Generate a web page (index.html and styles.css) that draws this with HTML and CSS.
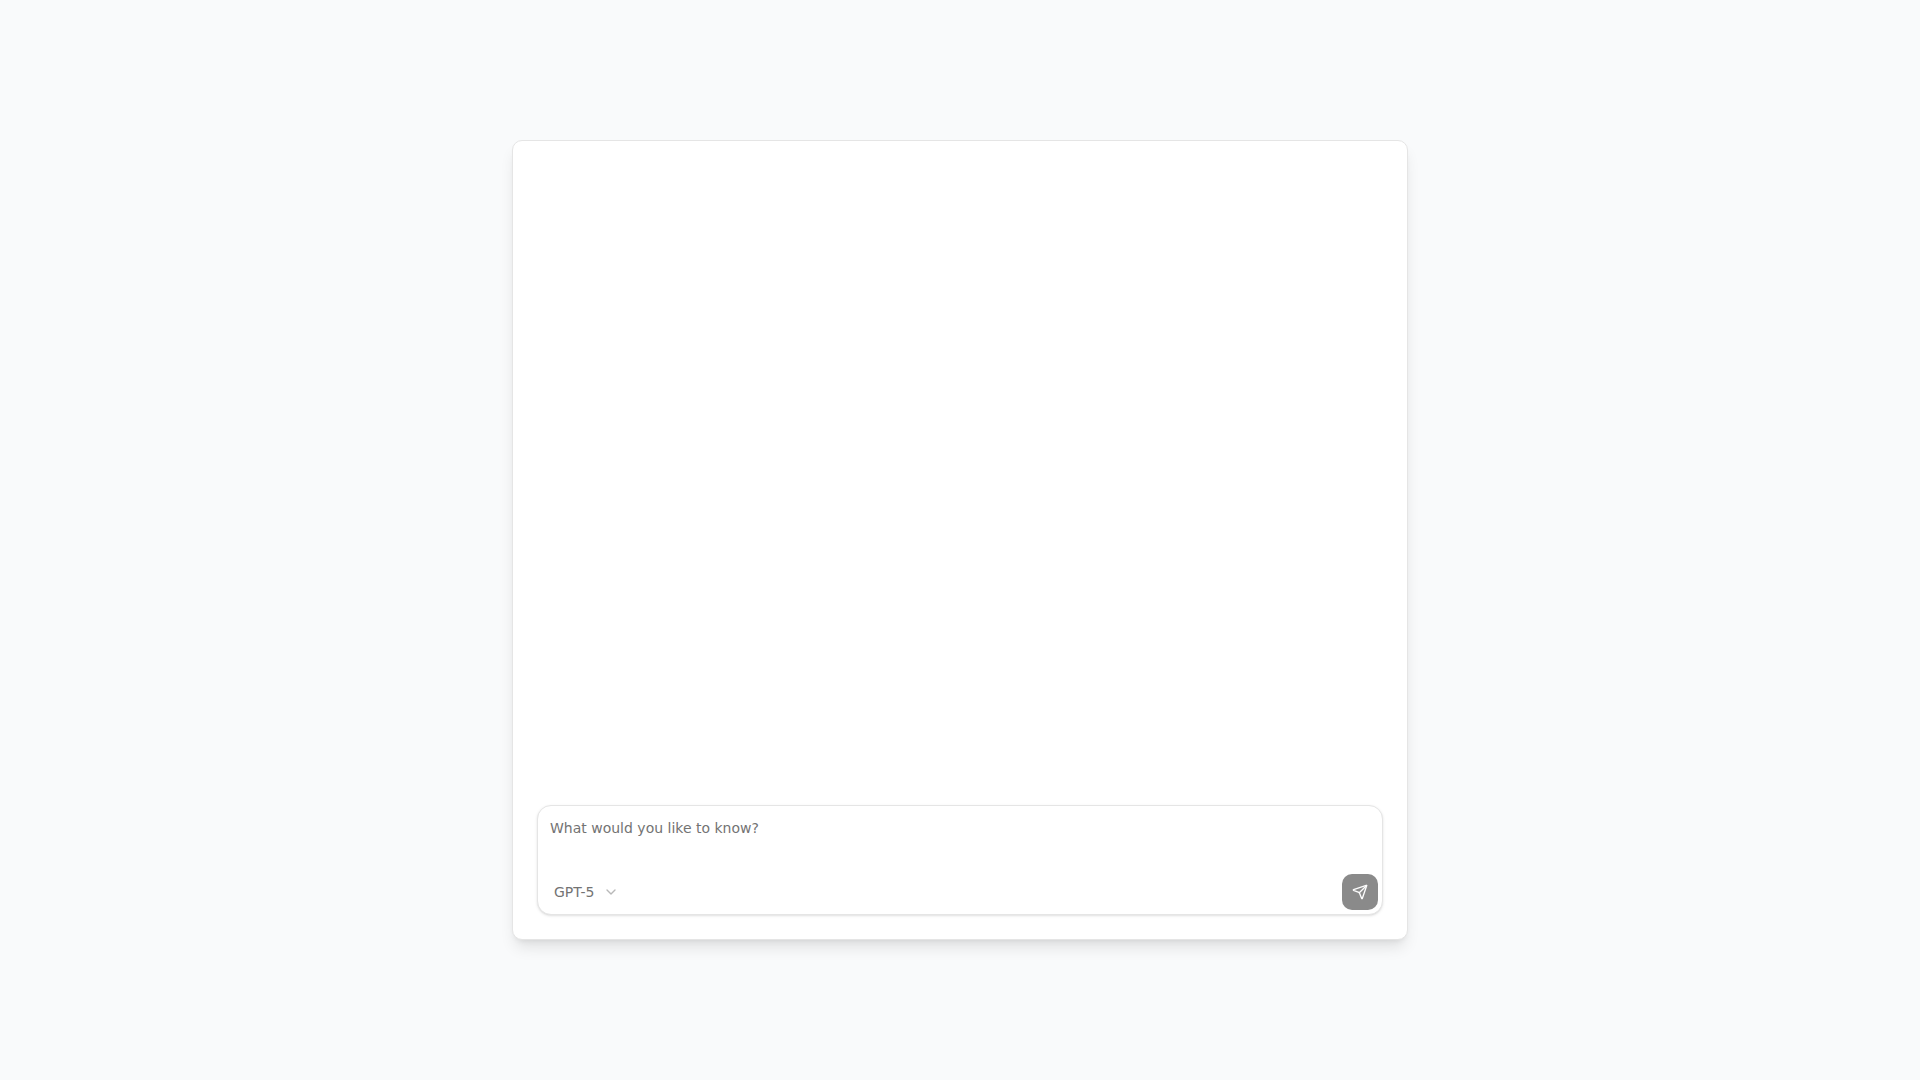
FILE: index.html
```html
<!DOCTYPE html>
<html lang="en">
<head>
  <meta charset="UTF-8" />
  <meta name="viewport" content="width=device-width, initial-scale=1.0" />
  <title>Chat</title>
  <link rel="stylesheet" href="styles.css">
</head>
<body>
  <main class="chat">
    <div class="messages" id="messages"></div>

    <form class="prompt">
      <textarea class="prompt-input" name="message" placeholder="What would you like to know?" aria-label="Message"></textarea>
      <div class="toolbar">
        <div class="model">
          <select class="model-select" name="model" aria-label="Model">
            <option>GPT-5</option>
          </select>
          <svg class="icon chevron" viewBox="0 0 24 24"><path d="m6 9 6 6 6-6" /></svg>
        </div>
        <button class="send-btn" type="submit" aria-label="Send" disabled>
          <svg class="icon" viewBox="0 0 24 24">
            <path d="M14.536 21.686a.5.5 0 0 0 .937-.024l6.5-19a.496.496 0 0 0-.635-.635l-19 6.5a.5.5 0 0 0-.024.937l7.93 3.18a2 2 0 0 1 1.112 1.11z" />
            <path d="m21.854 2.147-10.94 10.939" />
          </svg>
        </button>
      </div>
    </form>
  </main>
</body>
</html>
```
FILE: styles.css
```css
* {
  box-sizing: border-box;
}
body {
  margin: 0;
  min-height: 100vh;
  display: flex;
  align-items: center;
  justify-content: center;
  background-color: #f9fafb;
  font-family: "DejaVu Sans", sans-serif;
  font-size: 14px;
  line-height: 20px;
}
.chat {
  display: flex;
  flex-direction: column;
  width: 100%;
  max-width: 896px;
  min-height: 800px;
  padding: 24px;
  background-color: white;
  border: 1px solid #e5e5e5;
  border-radius: 10px;
  box-shadow: 0 10px 15px -3px rgba(0, 0, 0, 0.1), 0 4px 6px -4px rgba(0, 0, 0, 0.1);
}
.messages {
  flex: 1;
}
.prompt {
  overflow: hidden;
  background-color: white;
  border: 1px solid #e5e5e5;
  border-radius: 14px;
  box-shadow: 0 1px 3px rgba(0, 0, 0, 0.1), 0 1px 2px -1px rgba(0, 0, 0, 0.1);
}
.prompt-input {
  display: block;
  width: 100%;
  height: 64px;
  padding: 12px;
  border: none;
  outline: none;
  resize: none;
  background: transparent;
  font: inherit;
  color: #0a0a0a;
}
.prompt-input::placeholder {
  color: #737373;
}
.toolbar {
  display: flex;
  align-items: center;
  justify-content: space-between;
  padding: 4px;
}
.model {
  position: relative;
}
.model-select {
  appearance: none;
  height: 36px;
  padding: 0 36px 0 12px;
  border: none;
  border-radius: 8px;
  background: transparent;
  font: inherit;
  color: #737373;
  cursor: pointer;
}
.icon {
  width: 16px;
  height: 16px;
  fill: none;
  stroke: currentColor;
  stroke-width: 2;
  stroke-linecap: round;
  stroke-linejoin: round;
}
.chevron {
  position: absolute;
  top: 10px;
  right: 12px;
  color: #737373;
  opacity: 0.5;
  pointer-events: none;
}
.send-btn {
  display: flex;
  align-items: center;
  justify-content: center;
  width: 36px;
  height: 36px;
  padding: 0;
  border: none;
  border-radius: 10px;
  background-color: #171717;
  color: #fafafa;
}
.send-btn:disabled {
  opacity: 0.5;
}
```
